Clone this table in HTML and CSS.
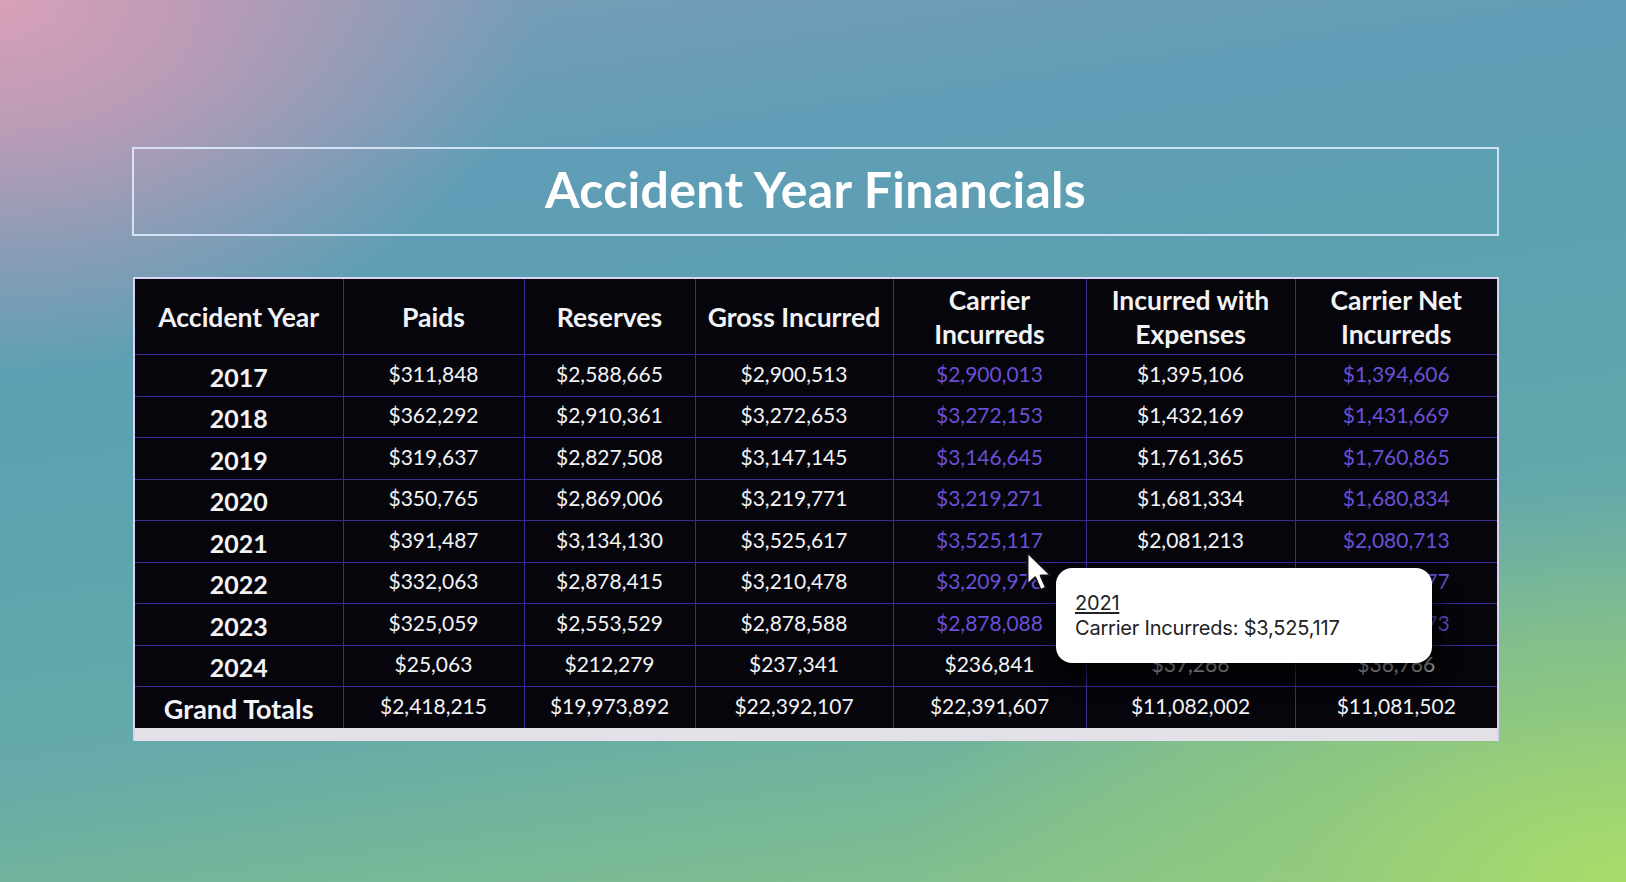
FILE: index.html
```html
<!DOCTYPE html>
<html lang="en">
<head>
<meta charset="utf-8">
<title>Accident Year Financials</title>
<link rel="stylesheet" href="styles.css">
</head>
<body>
<div class="page">
  <div class="title-box">
    <h1 class="title">Accident Year Financials</h1>
  </div>
  <div class="table-wrap">
    <table class="fin">
      <colgroup>
        <col class="c1"><col class="c2"><col class="c3"><col class="c4"><col class="c5"><col class="c6"><col class="c7">
      </colgroup>
      <thead>
        <tr>
          <th>Accident Year</th>
          <th>Paids</th>
          <th>Reserves</th>
          <th>Gross Incurred</th>
          <th>Carrier<br>Incurreds</th>
          <th>Incurred with<br>Expenses</th>
          <th>Carrier Net<br>Incurreds</th>
        </tr>
      </thead>
      <tbody>
        <tr><td class="yr">2017</td><td>$311,848</td><td>$2,588,665</td><td>$2,900,513</td><td class="pu">$2,900,013</td><td>$1,395,106</td><td class="pu">$1,394,606</td></tr>
        <tr><td class="yr">2018</td><td>$362,292</td><td>$2,910,361</td><td>$3,272,653</td><td class="pu">$3,272,153</td><td>$1,432,169</td><td class="pu">$1,431,669</td></tr>
        <tr><td class="yr">2019</td><td>$319,637</td><td>$2,827,508</td><td>$3,147,145</td><td class="pu">$3,146,645</td><td>$1,761,365</td><td class="pu">$1,760,865</td></tr>
        <tr><td class="yr">2020</td><td>$350,765</td><td>$2,869,006</td><td>$3,219,771</td><td class="pu">$3,219,271</td><td>$1,681,334</td><td class="pu">$1,680,834</td></tr>
        <tr><td class="yr">2021</td><td>$391,487</td><td>$3,134,130</td><td>$3,525,617</td><td class="pu">$3,525,117</td><td>$2,081,213</td><td class="pu">$2,080,713</td></tr>
        <tr><td class="yr">2022</td><td>$332,063</td><td>$2,878,415</td><td>$3,210,478</td><td class="pu">$3,209,978</td><td>$1,318,677</td><td class="pu">$1,318,177</td></tr>
        <tr><td class="yr">2023</td><td>$325,059</td><td>$2,553,529</td><td>$2,878,588</td><td class="pu">$2,878,088</td><td>$1,374,873</td><td class="pu">$1,374,373</td></tr>
        <tr><td class="yr">2024</td><td>$25,063</td><td>$212,279</td><td>$237,341</td><td>$236,841</td><td>$37,266</td><td>$36,766</td></tr>
        <tr class="totals"><td class="yr gt">Grand Totals</td><td>$2,418,215</td><td>$19,973,892</td><td>$22,392,107</td><td>$22,391,607</td><td>$11,082,002</td><td>$11,081,502</td></tr>
      </tbody>
    </table>
    <div class="tooltip">
      <div class="tt-year">2021</div>
      <div class="tt-line">Carrier Incurreds: $3,525,117</div>
    </div>
    <svg class="cursor" width="28" height="41" viewBox="0 0 13 19" aria-hidden="true">
      <path d="M0.7 0.7 L0.7 15.5 L4.3 12.2 L6.8 18 L9.2 17 L6.8 11.4 L11.6 11.4 Z" fill="#ffffff" stroke="#111111" stroke-width="0.9" stroke-linejoin="round"/>
    </svg>
  </div>
</div>
</body>
</html>
```
FILE: styles.css
```css
html, body {
  margin: 0;
  padding: 0;
}
body {
  width: 1626px;
  height: 882px;
  overflow: hidden;
  font-family: "Lato", "Open Sans", sans-serif;
  background:
    radial-gradient(ellipse 540px 370px at 0 0, rgba(216,160,184,1) 0%, rgba(205,155,182,0.8) 35%, rgba(160,150,185,0) 100%),
    radial-gradient(ellipse 720px 400px at 1626px 882px, rgba(170,220,105,1) 0%, rgba(150,205,120,0.7) 45%, rgba(130,195,140,0) 100%),
    linear-gradient(172deg, #7f9cb8 0%, #5f9db6 22%, #5ca3ae 48%, #66aaa9 70%, #7bbc92 88%, #8fc98a 100%);
}
.page {
  padding: 147px 127px 0 132px;
  display: flex;
  flex-direction: column;
  gap: 41px;
}
.title-box {
  height: 85px;
  border: 2px solid rgba(225, 238, 255, 0.85);
  display: flex;
  align-items: center;
  justify-content: center;
}
.title {
  margin: 0 0 6px 0;
  color: #ffffff;
  font-size: 50px;
  font-weight: 700;
  letter-spacing: 0.3px;
}
.table-wrap {
  position: relative;
  margin-left: 1px;
  width: 1362px;
  border: 2px solid #d9d2f4;
  border-bottom: 0;
  background: #e3e1e7;
  padding-bottom: 13px;
}
.fin {
  width: 1362px;
  table-layout: fixed;
  border-collapse: collapse;
  background: #05050b;
  color: #f3f3f5;
}
.c1 { width: 208px; }
.c2 { width: 181px; }
.c3 { width: 171px; }
.c4 { width: 198px; }
.c5 { width: 193px; }
.c6 { width: 209px; }
.c7 { width: 202px; }
.fin th, .fin td {
  border: 1px solid #3b2b98;
  text-align: center;
  padding: 0;
}
.fin tr:first-child th { border-top: 0; }
.fin tr th:first-child, .fin tr td:first-child { border-left: 0; }
.fin tr th:last-child, .fin tr td:last-child { border-right: 0; }
.fin tr.totals td { border-bottom: 0; }
.fin th {
  height: 75px;
  font-size: 26.5px;
  font-weight: 700;
  line-height: 34px;
}
.fin td {
  height: 37.5px;
  font-size: 21px;
  line-height: 24px;
  padding-bottom: 3px;
}
.fin td.yr {
  font-size: 25px;
  font-weight: 700;
  padding-bottom: 0;
  padding-top: 3px;
}
.fin td.gt {
  font-size: 27px;
}
.fin td.pu {
  color: #6a4fd6;
}
.tooltip {
  position: absolute;
  left: 921px;
  top: 289px;
  width: 338px;
  height: 50px;
  padding: 23px 19px 22px 19px;
  background: #ffffff;
  border-radius: 16px;
  box-shadow: 6px 14px 18px 2px rgba(0, 0, 0, 0.72);
  color: #222222;
  font-family: "Inter", "Liberation Sans", sans-serif;
  font-size: 20px;
  line-height: 25px;
  letter-spacing: -0.2px;
}
.tt-year {
  text-decoration: underline;
  text-underline-offset: 2px;
}
.cursor {
  position: absolute;
  left: 891px;
  top: 272px;
}
```
